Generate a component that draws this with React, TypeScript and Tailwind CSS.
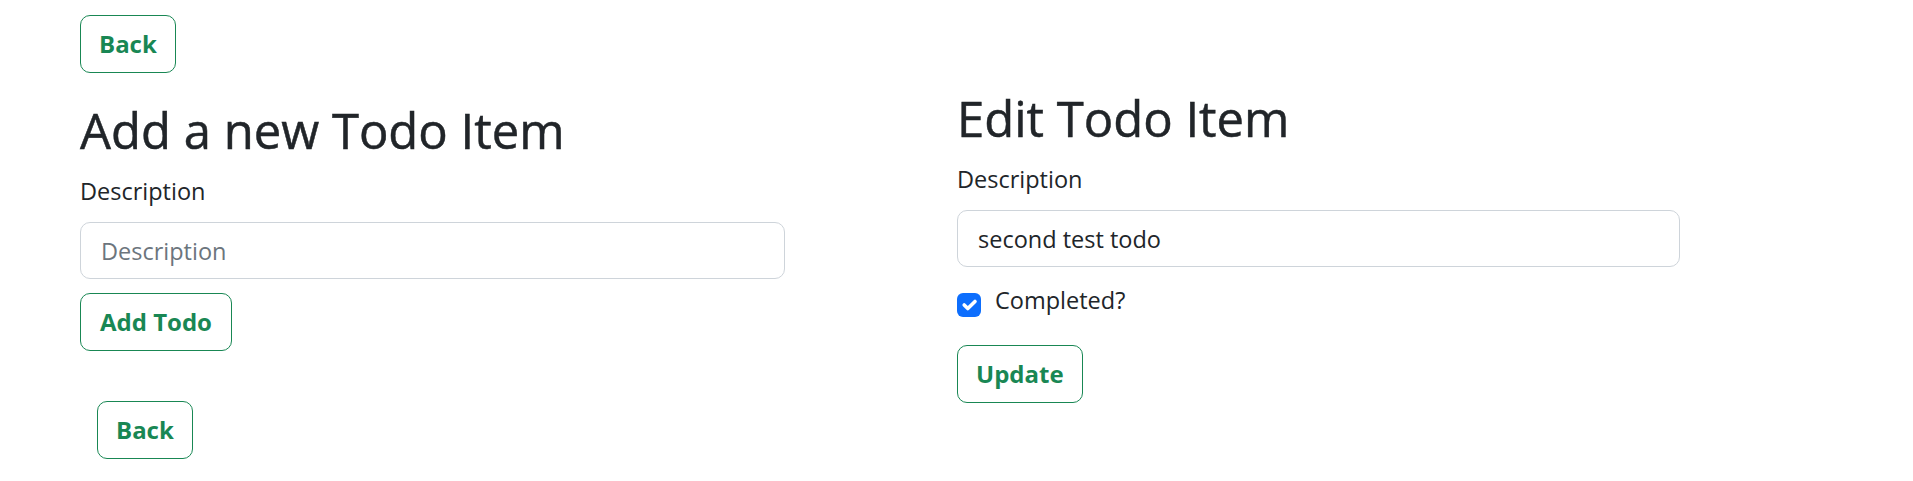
import React from "react";

const font = { fontFamily: '"Open Sans", "Noto Sans", sans-serif' };

function OutlineBtn({ children, className = "" }: { children: React.ReactNode; className?: string }) {
  return (
    <button
      type="button"
      className={`h-[58px] px-[18px] border border-[#198754] text-[#198754] rounded-[10px] text-[24px] font-bold leading-none bg-white ${className}`}
    >
      {children}
    </button>
  );
}

export default function App() {
  return (
    <div className="flex items-start bg-white text-[#212529] min-h-[481px]" style={font}>
      <div className="ml-[80px] w-[705px] pt-[15px] flex flex-col items-start">
        <OutlineBtn>Back</OutlineBtn>
        <h1 className="mt-[28px] text-[49px] leading-[58px] font-normal [-webkit-text-stroke:0.5px_#212529]">Add a new Todo Item</h1>
        <label className="mt-[15px] text-[23.5px] leading-[35px]">Description</label>
        <input
          className="mt-[13px] w-full h-[57px] border border-[#ced4da] rounded-[10px] px-[20px] text-[23.5px] placeholder:text-[#6c757d] outline-none"
          placeholder="Description"
        />
        <OutlineBtn className="mt-[14px] px-[19px]">Add Todo</OutlineBtn>
        <OutlineBtn className="mt-[50px] ml-[17px]">Back</OutlineBtn>
      </div>
      <div className="ml-[172px] w-[723px] pt-[89px] flex flex-col items-start">
        <h1 className="text-[49px] leading-[58px] font-normal [-webkit-text-stroke:0.5px_#212529]">Edit Todo Item</h1>
        <label className="mt-[15px] text-[23.5px] leading-[35px]">Description</label>
        <input
          className="mt-[13px] w-full h-[57px] border border-[#ced4da] rounded-[10px] px-[20px] text-[23.5px] outline-none text-[#212529]"
          defaultValue="second test todo"
        />
        <div className="mt-[16px] flex items-start gap-[14px]">
          <span className="mt-[10px] w-[24px] h-[24px] rounded-[6px] bg-[#0d6efd] flex items-center justify-center">
            <svg width="24" height="24" viewBox="0 0 20 20" fill="none">
              <path d="M6 10l3 3 6-6" stroke="#fff" strokeWidth="3" strokeLinecap="round" strokeLinejoin="round" />
            </svg>
          </span>
          <span className="text-[23.5px] leading-[35px]">Completed?</span>
        </div>
        <OutlineBtn className="mt-[27px]">Update</OutlineBtn>
      </div>
    </div>
  );
}
